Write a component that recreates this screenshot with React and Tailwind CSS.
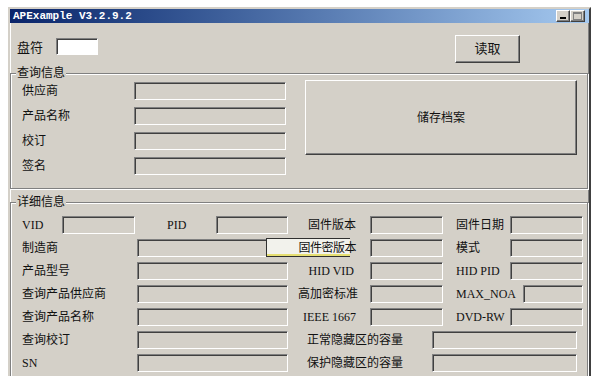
import React from "react";

const sunken =
  "h-[18px] border border-t-[#808080] border-l-[#808080] border-b-white border-r-white shadow-[inset_1px_1px_0_#404040] bg-[#d4d0c8]";
const raised =
  "flex items-center justify-center bg-[#d4d0c8] border border-t-white border-l-white border-b-[#404040] border-r-[#404040] shadow-[inset_-1px_-1px_0_#808080]";
const group =
  "relative border border-[#808080] shadow-[inset_1px_1px_0_#fff,1px_1px_0_#fff]";

function Edit({ w }) {
  return <div className={sunken} style={{ width: w }} />;
}

function Row({ children }) {
  return <div className="flex items-center h-[18px] leading-[18px]">{children}</div>;
}

export default function App() {
  return (
    <div className="w-[600px] h-[376px] overflow-hidden bg-white pl-[8px] pt-[7px] font-['Liberation_Serif','Noto_Sans_CJK_SC',serif] text-[12px] text-[#111]">
      <div className="w-[583px] h-[380px] flex flex-col bg-[#d4d0c8] border-2 border-t-[#d4d0c8] border-l-[#d4d0c8] border-r-[#404040] border-b-[#404040] shadow-[inset_1px_1px_0_#fff,inset_-1px_-1px_0_#808080]">
        {/* title bar */}
        <div className="h-[14px] flex items-center justify-between pl-[3px] pr-[4px] bg-gradient-to-r from-[#0a246a] to-[#a6caf0]">
          <span className="font-['Liberation_Mono',monospace] font-bold text-[11px] leading-[14px] text-white">
            APExample V3.2.9.2
          </span>
          <div className="flex">
            <div className={raised + " w-[14px] h-[12px] items-end pb-[2px]"}>
              <div className="w-[6px] h-[2px] bg-black" />
            </div>
            <div className={raised + " w-[15px] h-[12px]"}>
              <div className="w-[9px] h-[8px] border border-t-2 border-[#808080]" />
            </div>
          </div>
        </div>

        {/* top row */}
        <div className="flex h-[50px] pl-[7px]">
          <span className="mt-[16px] w-[39px] leading-[17px] text-[13px]">盘符</span>
          <div className="mt-[15px] w-[42px] h-[17px] bg-white border border-t-[#808080] border-l-[#808080] border-b-white border-r-white shadow-[inset_1px_1px_0_#404040]" />
          <button className={raised + " ml-[357px] mt-[12px] w-[65px] h-[28px] text-[13px]"}>读取</button>
        </div>

        {/* 查询信息 */}
        <div className={group + " h-[116px] mr-[1px]"}>
          <span className="absolute left-[5px] top-[-8px] px-[1px] bg-[#d4d0c8] leading-[15px]">查询信息</span>
          <div className="flex pl-[11px] pt-[8px]">
            <div className="flex flex-col gap-[7px]">
              {["供应商", "产品名称", "校订", "签名"].map((t) => (
                <Row key={t}>
                  <span className="w-[112px]">{t}</span>
                  <Edit w={152} />
                </Row>
              ))}
            </div>
            <button className={raised + " ml-[19px] mt-[-2px] w-[272px] h-[75px]"}>储存档案</button>
          </div>
        </div>

        {/* 详细信息 */}
        <div className={group + " flex-1 mt-[13px] mr-[1px]"}>
          <span className="absolute left-[5px] top-[-8px] px-[1px] bg-[#d4d0c8] leading-[15px]">详细信息</span>
          <div className="flex flex-col gap-[5px] pl-[11px] pt-[13px]">
            <Row>
              <span className="w-[40px]">VID</span>
              <Edit w={73} />
              <span className="w-[81px] pl-[32px]">PID</span>
              <Edit w={72} />
              <span className="w-[82px] pr-[14px] text-right">固件版本</span>
              <Edit w={73} />
              <span className="w-[67px] pl-[13px]">固件日期</span>
              <Edit w={73} />
            </Row>
            <Row>
              <span className="w-[115px]">制造商</span>
              <Edit w={151} />
              <span className="relative w-[82px] pr-[14px] text-right">
                <span className="absolute left-[-22px] top-[-1px] w-[84px] h-[19px] bg-[#f2f2ec] border-l border-t border-b border-[#303030] shadow-[inset_0_-2px_0_#e6df72]" />
                <span className="relative tracking-[-0.5px]">固件密版本</span>
              </span>
              <Edit w={73} />
              <span className="w-[67px] pl-[13px]">模式</span>
              <Edit w={73} />
            </Row>
            <Row>
              <span className="w-[115px]">产品型号</span>
              <Edit w={151} />
              <span className="w-[82px] pr-[16px] text-right">HID VID</span>
              <Edit w={73} />
              <span className="w-[67px] pl-[13px]">HID PID</span>
              <Edit w={73} />
            </Row>
            <Row>
              <span className="w-[115px]">查询产品供应商</span>
              <Edit w={151} />
              <span className="w-[82px] pr-[12px] text-right">高加密标准</span>
              <Edit w={73} />
              <span className="w-[80px] pl-[13px]">MAX_NOA</span>
              <Edit w={60} />
            </Row>
            <Row>
              <span className="w-[115px]">查询产品名称</span>
              <Edit w={151} />
              <span className="w-[82px] pr-[14px] text-right">IEEE 1667</span>
              <Edit w={73} />
              <span className="w-[67px] pl-[13px]">DVD-RW</span>
              <Edit w={73} />
            </Row>
            <Row>
              <span className="w-[115px]">查询校订</span>
              <Edit w={151} />
              <span className="w-[144px] pl-[19px]">正常隐藏区的容量</span>
              <Edit w={145} />
            </Row>
            <Row>
              <span className="w-[115px]">SN</span>
              <Edit w={151} />
              <span className="w-[144px] pl-[19px]">保护隐藏区的容量</span>
              <Edit w={145} />
            </Row>
          </div>
        </div>
      </div>
    </div>
  );
}
